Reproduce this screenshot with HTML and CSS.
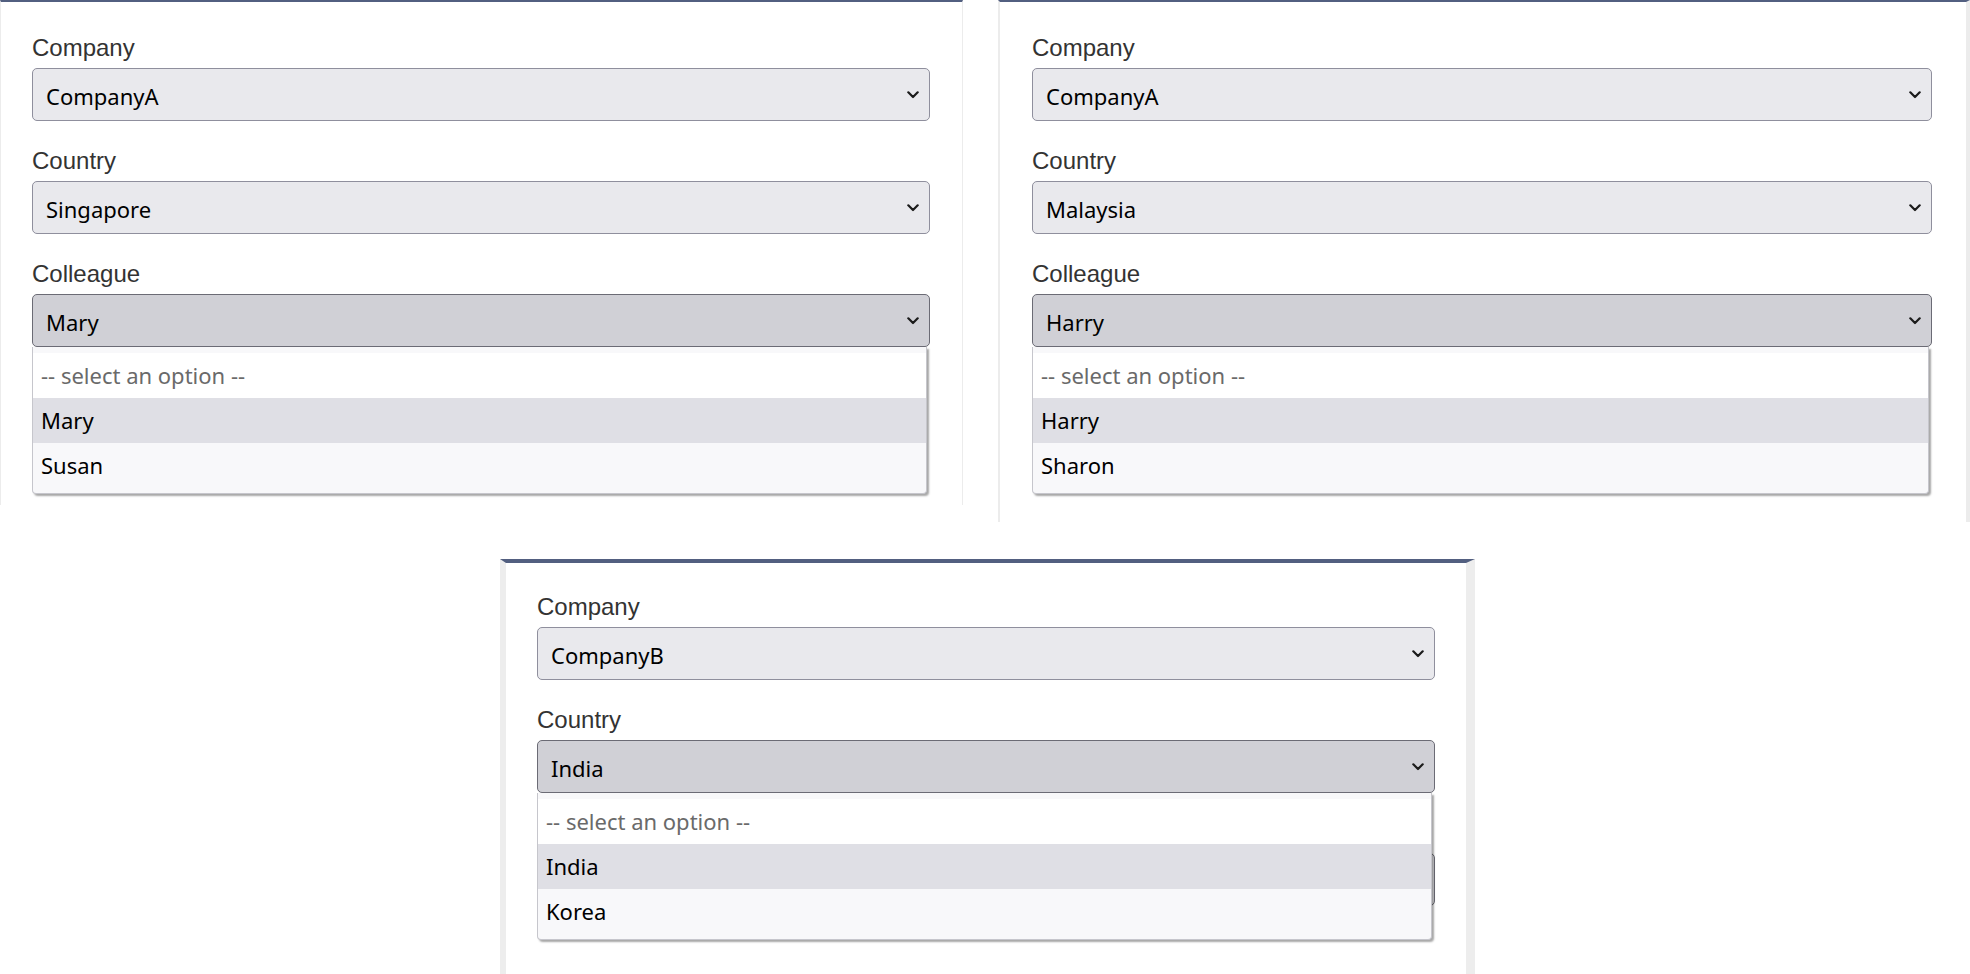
FILE: index.html
```html
<!DOCTYPE html>
<html lang="en">
<head>
<meta charset="UTF-8">
<meta name="viewport" content="width=device-width, initial-scale=1.0">
<title>Company / Country / Colleague</title>
<link rel="stylesheet" href="styles.css">
</head>
<body>

<div class="row-top">
  <!-- CompanyA / Singapore, colleague list open -->
  <div class="panel panel-left">
    <div class="field">
      <label>Company</label>
      <div class="select">
        <span>CompanyA</span>
        <svg class="chevron" width="12" height="8" viewBox="0 0 12 8"><polyline points="1.3,1.3 6,6 10.7,1.3"/></svg>
      </div>
    </div>
    <div class="field">
      <label>Country</label>
      <div class="select">
        <span>Singapore</span>
        <svg class="chevron" width="12" height="8" viewBox="0 0 12 8"><polyline points="1.3,1.3 6,6 10.7,1.3"/></svg>
      </div>
    </div>
    <div class="field">
      <label>Colleague</label>
      <div class="select open">
        <span>Mary</span>
        <svg class="chevron" width="12" height="8" viewBox="0 0 12 8"><polyline points="1.3,1.3 6,6 10.7,1.3"/></svg>
      </div>
      <ul class="popup">
        <li class="option blank">-- select an option --</li>
        <li class="option active">Mary</li>
        <li class="option">Susan</li>
      </ul>
    </div>
  </div>

  <!-- CompanyA / Malaysia, colleague list open -->
  <div class="panel panel-right">
    <div class="field">
      <label>Company</label>
      <div class="select">
        <span>CompanyA</span>
        <svg class="chevron" width="12" height="8" viewBox="0 0 12 8"><polyline points="1.3,1.3 6,6 10.7,1.3"/></svg>
      </div>
    </div>
    <div class="field">
      <label>Country</label>
      <div class="select">
        <span>Malaysia</span>
        <svg class="chevron" width="12" height="8" viewBox="0 0 12 8"><polyline points="1.3,1.3 6,6 10.7,1.3"/></svg>
      </div>
    </div>
    <div class="field">
      <label>Colleague</label>
      <div class="select open">
        <span>Harry</span>
        <svg class="chevron" width="12" height="8" viewBox="0 0 12 8"><polyline points="1.3,1.3 6,6 10.7,1.3"/></svg>
      </div>
      <ul class="popup">
        <li class="option blank">-- select an option --</li>
        <li class="option active">Harry</li>
        <li class="option">Sharon</li>
      </ul>
    </div>
  </div>
</div>

<!-- CompanyB, country list open -->
<div class="panel panel-bottom">
  <div class="field">
    <label>Company</label>
    <div class="select">
      <span>CompanyB</span>
      <svg class="chevron" width="12" height="8" viewBox="0 0 12 8"><polyline points="1.3,1.3 6,6 10.7,1.3"/></svg>
    </div>
  </div>
  <div class="field">
    <label>Country</label>
    <div class="select open">
      <span>India</span>
      <svg class="chevron" width="12" height="8" viewBox="0 0 12 8"><polyline points="1.3,1.3 6,6 10.7,1.3"/></svg>
    </div>
    <ul class="popup">
      <li class="option blank">-- select an option --</li>
      <li class="option active">India</li>
      <li class="option">Korea</li>
    </ul>
  </div>
  <!-- colleague select, hidden behind the open list -->
  <div class="field covered">
    <div class="select"></div>
  </div>
</div>

</body>
</html>
```

FILE: styles.css
```css
body {
  margin: 0;
  background-color: #fff;
  font-family: "Liberation Sans", Arial, sans-serif;
  overflow: hidden;
}
.row-top {
  display: flex;
  align-items: flex-start;
}
.panel {
  box-sizing: border-box;
  background-color: #fff;
  border-top: 4px solid #525f80;
  padding: 30px 31px 0;
}
.row-top .panel {
  border-top-width: 2px;
  padding-top: 32px;
}
.panel-left {
  width: 963px;
  height: 505px;
  border-left: 1px solid #ececec;
  border-right: 1px solid #ececec;
  padding-right: 32px;
}
.panel-right {
  width: 972px;
  height: 522px;
  margin-left: 35px;
  border-left: 2px solid #ececec;
  border-right: 4px solid #ececec;
  padding-left: 32px;
  padding-right: 34px;
}
.panel-bottom {
  width: 975px;
  height: 415px;
  margin: 37px 0 0 500px;
  border-left: 6px solid #ededed;
  border-right: 9px solid #ededed;
}
.field {
  position: relative;
  margin-bottom: 26px;
}
.field.covered {
  padding-top: 34px;
}
.field.covered .select {
  border-color: #6b6b75;
}
.field label {
  display: block;
  font-size: 24px;
  line-height: 27px;
  color: #333;
  margin-bottom: 7px;
}
.select {
  box-sizing: border-box;
  height: 53px;
  display: flex;
  align-items: center;
  justify-content: space-between;
  padding: 2px 10px 0 13px;
  background-color: #e9e9ed;
  border: 1px solid #8f8f9d;
  border-radius: 5px;
  font-family: "Noto Sans", "Open Sans", sans-serif;
  font-size: 22px;
  color: #000;
}
.select.open {
  background-color: #d0d0d6;
  border-color: #6b6b75;
}
.chevron {
  flex-shrink: 0;
  margin-top: -2px;
}
.chevron polyline {
  fill: none;
  stroke: #1b1b1b;
  stroke-width: 2.2;
  stroke-linejoin: round;
  stroke-linecap: round;
}
.popup {
  position: absolute;
  top: 100%;
  left: 0;
  z-index: 2;
  box-sizing: border-box;
  width: calc(100% - 3px);
  list-style: none;
  margin: 0;
  padding: 6px 0 5px;
  background-color: #f8f8fa;
  border: 1px solid #c6c6cc;
  border-top: none;
  border-radius: 0 0 4px 4px;
  box-shadow: 2px 2px 2px rgba(0, 0, 0, 0.35);
  font-family: "Noto Sans", "Open Sans", sans-serif;
  font-size: 22px;
  color: #000;
}
.option {
  height: 45px;
  line-height: 45px;
  padding-left: 8px;
}
.option.blank {
  background-color: #fff;
  color: #6a6a6a;
}
.option.active {
  background-color: #dfdfe5;
}
```
